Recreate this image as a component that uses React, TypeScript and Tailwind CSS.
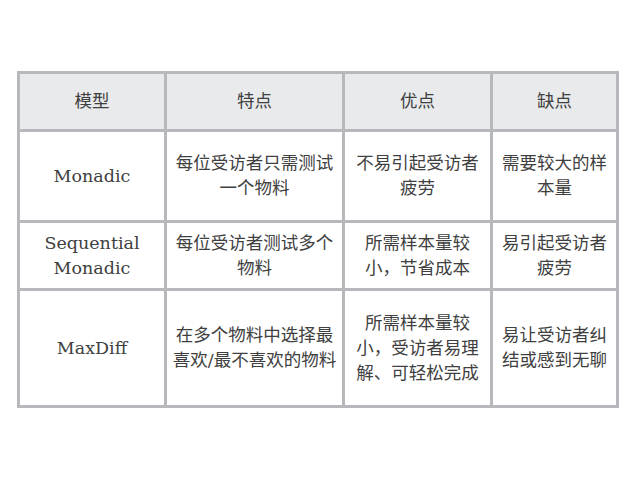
const HEAD = ["模型", "特点", "优点", "缺点"];

const ROWS: string[][][] = [
  [["Monadic"], ["每位受访者只需测试", "一个物料"], ["不易引起受访者", "疲劳"], ["需要较大的样", "本量"]],
  [["Sequential", "Monadic"], ["每位受访者测试多个", "物料"], ["所需样本量较", "小，节省成本"], ["易引起受访者", "疲劳"]],
  [["MaxDiff"], ["在多个物料中选择最", "喜欢/最不喜欢的物料"], ["所需样本量较", "小，受访者易理", "解、可轻松完成"], ["易让受访者纠", "结或感到无聊"]],
];

function Cell({ lines, head }: { lines: string[]; head?: boolean }) {
  return (
    <div
      className={`flex flex-col items-center justify-center text-center ${
        head ? "bg-[#e9eaec]" : "bg-white"
      }`}
    >
      {lines.map((l) => (
        <span key={l} className="block whitespace-nowrap">
          {l}
        </span>
      ))}
    </div>
  );
}

export default function App() {
  return (
    <div className="h-[480px] w-[640px] bg-white pl-[17px] pt-[71px]">
      <div
        className="grid w-[602px] grid-cols-[144px_175px_145px_123px] grid-rows-[55px_88px_65px_114px] gap-[3px] border-[3px] border-[#b6b8bb] bg-[#b6b8bb] text-[17.5px] leading-[25px] text-[#404040]"
        style={{ fontFamily: '"DejaVu Serif", "Noto Sans CJK SC", serif' }}
      >
        {HEAD.map((h) => (
          <Cell key={h} lines={[h]} head />
        ))}
        {ROWS.map((row, i) =>
          row.map((lines, j) => <Cell key={`${i}-${j}`} lines={lines} />)
        )}
      </div>
    </div>
  );
}
